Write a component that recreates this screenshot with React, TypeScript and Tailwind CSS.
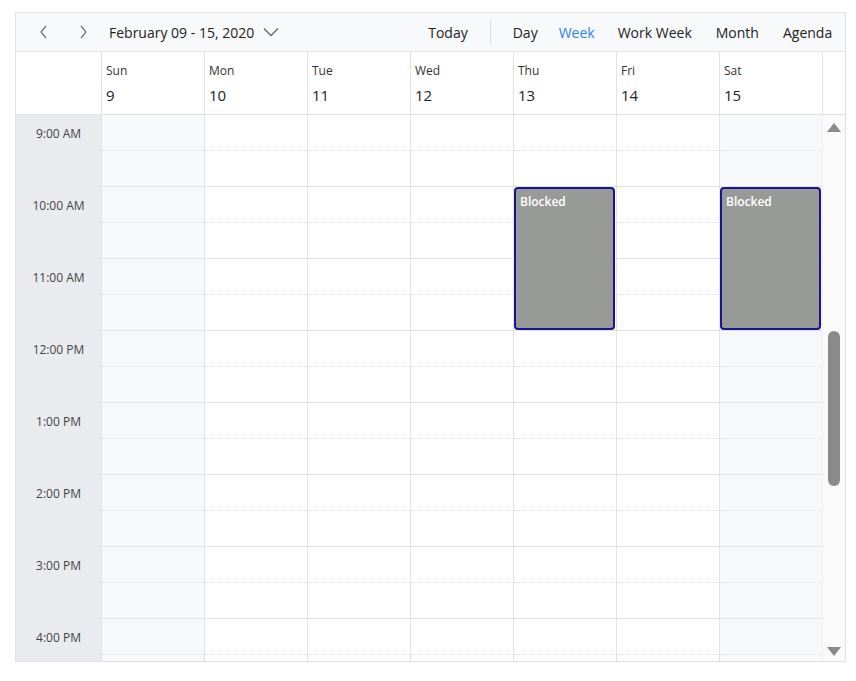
import React from 'react';

const days = [
  { name: 'Sun', num: '9', weekend: true },
  { name: 'Mon', num: '10' },
  { name: 'Tue', num: '11' },
  { name: 'Wed', num: '12' },
  { name: 'Thu', num: '13', blocked: true },
  { name: 'Fri', num: '14' },
  { name: 'Sat', num: '15', weekend: true, blocked: true },
];
const hours = ['9:00 AM', '10:00 AM', '11:00 AM', '12:00 PM', '1:00 PM', '2:00 PM', '3:00 PM', '4:00 PM'];

const HourCell: React.FC = () => (
  <div className="h-[72px] border-b border-[#e0e2e6] flex flex-col">
    <div className="h-[36px] border-b border-dotted border-[#dcdde0]" />
  </div>
);

export default function App() {
  return (
    <div className="p-[12px_10px_0_15px] bg-white" style={{ fontFamily: '"Open Sans", "Noto Sans", sans-serif' }}>
      <div className="w-[831px] h-[650px] border border-[#dfe1e5] flex flex-col overflow-hidden">
        {/* toolbar */}
        <div className="h-[39px] shrink-0 bg-[#f8f9fb] border-b border-[#e2e4e8] flex items-center text-[14px] text-[#222]">
          <svg className="ml-[22px]" width="12" height="16" viewBox="0 0 12 16" fill="none" stroke="#777" strokeWidth="1.3"><path d="M8 2 L3 8 L8 14" /></svg>
          <svg className="ml-[27px]" width="12" height="16" viewBox="0 0 12 16" fill="none" stroke="#777" strokeWidth="1.3"><path d="M4 2 L9 8 L4 14" /></svg>
          <span className="ml-[20px]">February 09 - 15, 2020</span>
          <svg className="ml-[9px]" width="16" height="10" viewBox="0 0 16 10" fill="none" stroke="#666" strokeWidth="1.3"><path d="M1 1.5 L8 8.5 L15 1.5" /></svg>
          <span className="ml-[149px]">Today</span>
          <div className="ml-[22px] w-px h-[24px] bg-[#dcdee2]" />
          <span className="ml-[22px]">Day</span>
          <span className="ml-[21px] text-[#2d7ff9]">Week</span>
          <span className="ml-[23px]">Work Week</span>
          <span className="ml-[24px]">Month</span>
          <span className="ml-[24px]">Agenda</span>
        </div>
        {/* header */}
        <div className="flex h-[63px] shrink-0 border-b border-[#e0e2e6]">
          <div className="w-[85px] shrink-0 bg-white" />
          {days.map((d) => (
            <div key={d.name} className="w-[103px] shrink-0 border-l border-[#e0e2e6] bg-white pl-[4px] pt-[11px]">
              <div className="text-[12px] text-[#333] leading-[16px]">{d.name}</div>
              <div className="text-[15px] text-[#222] mt-[6px] leading-[20px]">{d.num}</div>
            </div>
          ))}
          <div className="flex-1 border-l border-[#e0e2e6] bg-white" />
        </div>
        {/* body */}
        <div className="flex flex-1 overflow-hidden">
          <div className="w-[85px] shrink-0 bg-[#e9ebee]">
            {hours.map((h) => (
              <div key={h} className="h-[72px] text-[12px] text-[#444] text-center pt-[10px]">{h}</div>
            ))}
          </div>
          {days.map((d) => (
            <div key={d.name} className={`relative w-[103px] shrink-0 border-l border-[#e0e2e6] ${d.weekend ? 'bg-[#f7f8fa]' : 'bg-white'}`}>
              {hours.map((h) => <HourCell key={h} />)}
              {d.blocked && (
                <div className="absolute top-[72px] left-0 right-[1px] h-[143px] bg-[#979a97] border-2 border-[#1b1490] rounded-[4px] px-[4px] pt-[6px] text-[12px] font-semibold text-white leading-[14px]">
                  Blocked
                </div>
              )}
            </div>
          ))}
          <div className="flex-1 bg-[#fafafa] border-l border-[#f0f0f0] flex flex-col items-center">
            <svg className="mt-[8px]" width="14" height="9" viewBox="0 0 14 9"><path d="M7 0 L14 9 L0 9 Z" fill="#8a8a8a" /></svg>
            <div className="mt-[199px] w-[12px] h-[155px] rounded-full bg-[#8a8a8a]" />
            <div className="flex-1" />
            <svg className="mb-[5px]" width="14" height="9" viewBox="0 0 14 9"><path d="M0 0 L14 0 L7 9 Z" fill="#8a8a8a" /></svg>
          </div>
        </div>
      </div>
    </div>
  );
}
